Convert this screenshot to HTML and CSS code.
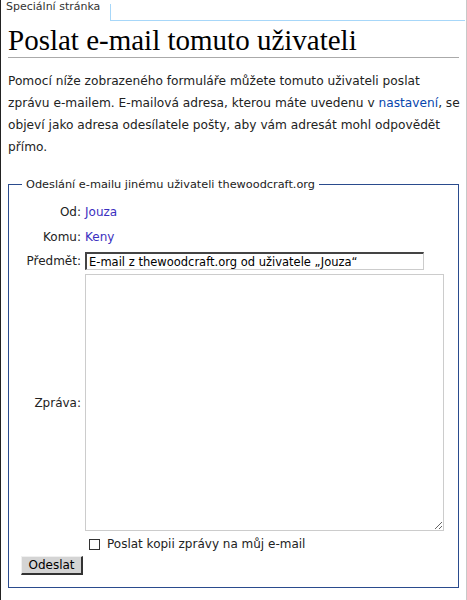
FILE: index.html
```html
<!DOCTYPE html>
<html lang="cs">
<head>
<meta charset="utf-8">
<title>Poslat e-mail tomuto uživateli</title>
<link rel="stylesheet" href="styles.css">
</head>
<body>
<div class="page">
  <div class="tabs">
    <div class="tab">Speciální stránka</div>
    <div class="tab-fill"></div>
  </div>
  <div class="content">
    <h1 class="title">Poslat e-mail tomuto uživateli</h1>
    <p class="intro">Pomocí níže zobrazeného formuláře můžete tomuto uživateli poslat<br>zprávu e-mailem. E-mailová adresa, kterou máte uvedenu v <a href="#" class="link">nastavení</a>, se objeví jako adresa odesílatele pošty, aby vám adresát mohl odpovědět přímo.</p>
    <fieldset class="box">
      <legend class="legend">Odeslání e-mailu jinému uživateli thewoodcraft.org</legend>
      <table class="form">
        <tr class="row-from">
          <td class="label">Od:</td>
          <td class="value"><a href="#" class="user">Jouza</a></td>
        </tr>
        <tr class="row-to">
          <td class="label">Komu:</td>
          <td class="value"><a href="#" class="user">Keny</a></td>
        </tr>
        <tr class="row-subj">
          <td class="label">Předmět:</td>
          <td class="value"><input class="subject" type="text" value="E-mail z thewoodcraft.org od uživatele „Jouza“"></td>
        </tr>
        <tr class="row-msg">
          <td class="label">Zpráva:</td>
          <td class="value"><textarea class="message"></textarea></td>
        </tr>
        <tr class="row-cc">
          <td></td>
          <td class="value"><label class="cc"><span class="check"></span>Poslat kopii zprávy na můj e-mail</label></td>
        </tr>
      </table>
      <button class="send" type="button">Odeslat</button>
    </fieldset>
  </div>
</div>
</body>
</html>
```

FILE: styles.css
```css
html, body {
  margin: 0;
  padding: 0;
  background: #fff;
}
body {
  font-family: "DejaVu Sans", sans-serif;
  color: #222;
  width: 467px;
  height: 600px;
  overflow: hidden;
}
.page {
  box-sizing: border-box;
  height: 600px;
  border-left: 1px solid #222;
  border-right: 1px solid #c8c8c8;
}
.tabs {
  display: flex;
  height: 21px;
}
.tab {
  font-size: 11px;
  color: #333;
  padding: 0 0 0 5px;
  width: 104px;
  line-height: 14px;
  white-space: nowrap;
}
.tab-fill {
  flex: 1;
  margin-top: 4px;
  border-left: 1px solid #a7d7f9;
  border-bottom: 1px solid #a7d7f9;
  margin-right: 1px;
}
.content {
  padding: 0 7px 0 7px;
}
.title {
  font-family: "Liberation Serif", "DejaVu Serif", serif;
  font-weight: normal;
  font-size: 29px;
  line-height: 33px;
  margin: 3px 0 0 0;
  padding-bottom: 0;
  border-bottom: 1px solid #aaa;
  color: #000;
}
.intro {
  font-size: 12.2px;
  line-height: 22px;
  margin: 12px -5px 0 0;
}
.link {
  color: #0645ad;
  text-decoration: none;
}
.box {
  margin: 20px 0 0 0;
  padding: 8px 12px 12px 12px;
  border: 1px solid #2a4b8d;
  font-size: 12px;
}
.legend {
  padding: 0 4px;
  margin-left: 1px;
  font-size: 11.3px;
  color: #222;
}
.form {
  border-collapse: collapse;
  width: 100%;
}
.form td {
  padding: 2px 2px;
}
.label {
  text-align: right;
  vertical-align: middle;
  width: 58px;
  color: #222;
  white-space: nowrap;
}
.row-from td {
  height: 21px;
}
.row-to td {
  height: 22px;
}
.user {
  color: #3b2fc0;
  text-decoration: none;
}
.subject {
  box-sizing: border-box;
  width: 339px;
  height: 18px;
  margin: 0;
  padding: 0 2px;
  font-family: "DejaVu Sans", sans-serif;
  font-size: 11.5px;
  color: #000;
  border-style: solid;
  border-width: 2px 1px 1px 2px;
  border-color: #444 #ccc #ccc #444;
  background: #fff;
}
.message {
  display: block;
  box-sizing: border-box;
  width: 359px;
  height: 257px;
  margin: 0;
  border: 1px solid #ccc;
  resize: both;
}
.cc {
  display: flex;
  align-items: center;
  gap: 7px;
  padding-left: 4px;
  height: 18px;
  color: #222;
}
.check {
  width: 9px;
  height: 9px;
  border: 1px solid #333;
  background: #fff;
}
.send {
  margin: 1px 0 0 0;
  width: 62px;
  height: 19px;
  padding: 0;
  font-family: "DejaVu Sans", sans-serif;
  font-size: 12px;
  color: #000;
  background: #d4d4d4;
  border-style: solid;
  border-width: 1px 2px 2px 1px;
  border-color: #f0f0f0 #333 #333 #f0f0f0;
}
```
